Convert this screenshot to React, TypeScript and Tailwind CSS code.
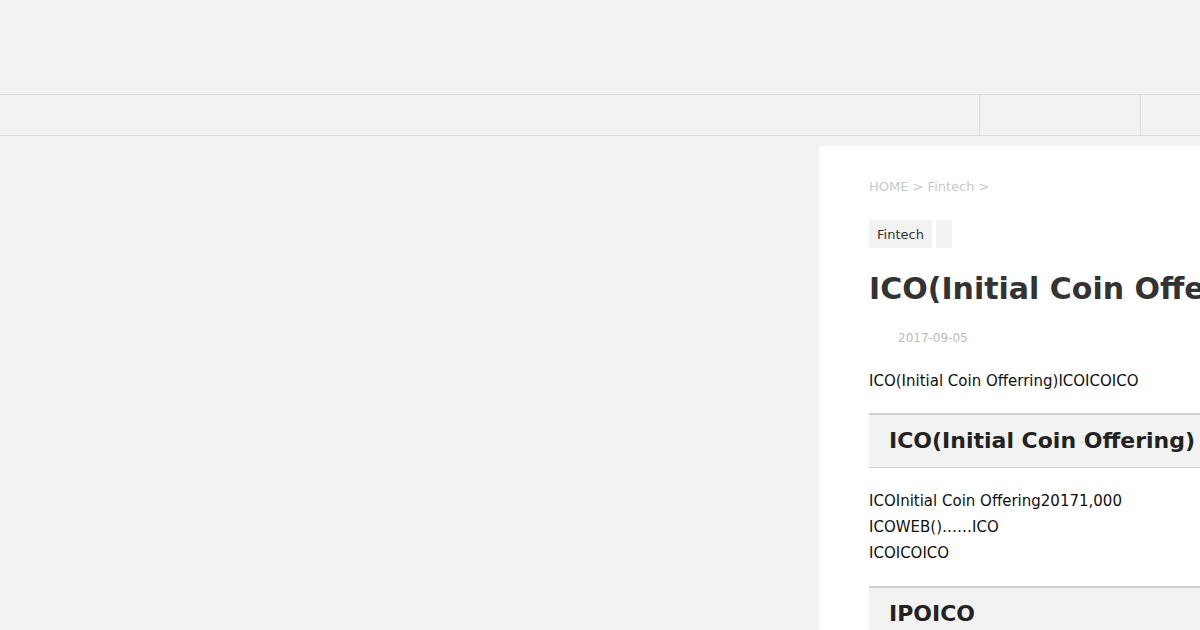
import React from 'react';

const App = () => {
  return (
    <div className="w-[1200px] h-[630px] overflow-hidden bg-[#f2f2f2] text-[#222]" style={{ fontFamily: '"DejaVu Sans", sans-serif' }}>
      {/* header */}
      <header className="h-[95px] border-b border-[#dcdcdc]" />
      {/* nav */}
      <nav className="h-[41px] border-b border-[#dcdcdc] flex">
        <div className="w-[979px] shrink-0" />
        <div className="w-[161px] shrink-0 border-l border-[#dcdcdc]" />
        <div className="flex-1 border-l border-[#dcdcdc]" />
      </nav>

      <div className="flex pt-[10px]">
        <div className="w-[819px] shrink-0" />
        <main className="w-[800px] shrink-0 bg-white rounded-[3px] pl-[50px] pt-[32px] h-[600px]">
          <div className="text-[13px] text-[#c8c8c8] leading-[18px]">HOME &gt; Fintech &gt;</div>

          <div className="flex gap-[4px] mt-[24px]">
            <span className="bg-[#f2f2f2] text-[13px] text-[#333] px-[8px] h-[28px] pt-[1px] leading-[28px]">Fintech</span>
            <span className="bg-[#f2f2f2] w-[16px] h-[28px]" />
          </div>

          <h1 className="mt-[23px] text-[30px] font-bold text-[#333] leading-[36px] whitespace-nowrap">
            ICO(Initial Coin Offering)
          </h1>

          <div className="mt-[23px] pl-[29px] text-[12px] text-[#bbb] leading-[16px]">2017-09-05</div>

          <p className="mt-[22px] text-[15px] leading-[26px] text-[#111] whitespace-nowrap">ICO(Initial Coin Offerring)ICOICOICO</p>

          <h2 className="mt-[19px] bg-[#f2f2f2] border-t-2 border-b border-[#d0d0d0] pl-[20px] pb-[2px] h-[55px] flex items-center text-[22px] font-bold text-[#222] whitespace-nowrap">
            ICO(Initial Coin Offering)
          </h2>

          <div className="mt-[20px] text-[15px] leading-[26px] text-[#111] whitespace-nowrap">
            <p>ICOInitial Coin Offering20171,000</p>
            <p>ICOWEB()……ICO</p>
            <p>ICOICOICO</p>
          </div>

          <h2 className="mt-[20px] bg-[#f2f2f2] border-t-2 border-b border-[#d0d0d0] pl-[20px] pb-[2px] h-[55px] flex items-center text-[22px] font-bold text-[#222] whitespace-nowrap">
            IPOICO
          </h2>
        </main>
      </div>
    </div>
  );
};

export default App;
